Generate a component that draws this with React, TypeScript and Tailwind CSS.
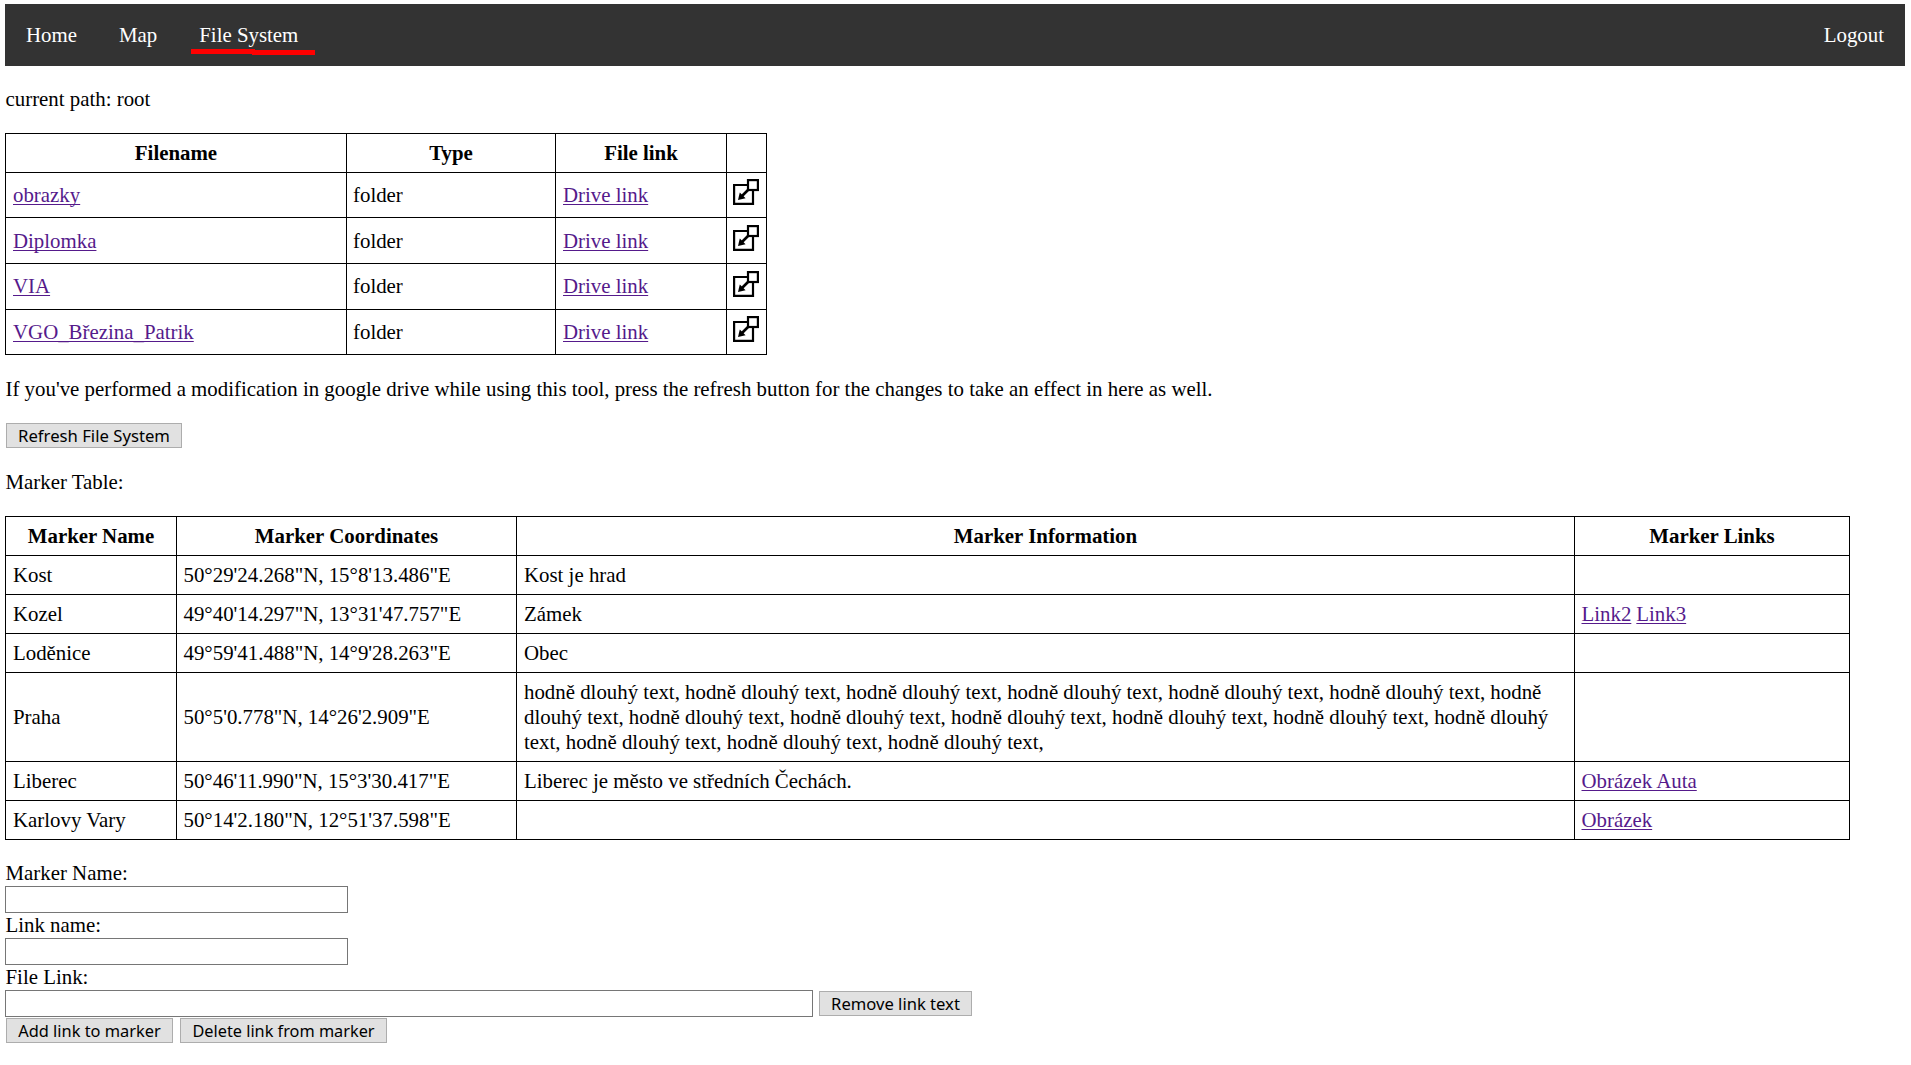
import type { ReactNode } from 'react';

const folders = [
  { name: 'obrazky', height: 'h-[45px]', pad: '', iconPad: 'pb-[6px]' },
  { name: 'Diplomka', height: 'h-[46px]', pad: 'pt-px', iconPad: 'pb-[5px]' },
  { name: 'VIA', height: 'h-[46px]', pad: '', iconPad: 'pb-[5px]' },
  { name: 'VGO_Březina_Patrik', height: 'h-[45px]', pad: '', iconPad: 'pb-[6px]' },
];

const longText = Array(16).fill('hodně dlouhý text,').join(' ');

const markers = [
  { name: 'Kost', coords: '50°29\'24.268"N, 15°8\'13.486"E', info: 'Kost je hrad', links: [] },
  { name: 'Kozel', coords: '49°40\'14.297"N, 13°31\'47.757"E', info: 'Zámek', links: ['Link2', 'Link3'] },
  { name: 'Loděnice', coords: '49°59\'41.488"N, 14°9\'28.263"E', info: 'Obec', links: [] },
  { name: 'Praha', coords: '50°5\'0.778"N, 14°26\'2.909"E', info: longText, links: [] },
  { name: 'Liberec', coords: '50°46\'11.990"N, 15°3\'30.417"E', info: 'Liberec je město ve středních Čechách.', links: ['Obrázek Auta'] },
  { name: 'Karlovy Vary', coords: '50°14\'2.180"N, 12°51\'37.598"E', info: '', links: ['Obrázek'] },
];

const cell = 'border-r border-b border-black px-[7px]';
const tightCell = 'border-r border-b border-black pl-[6.5px] pr-[7px]';

function Link({ children }: { children: ReactNode }) {
  return (
    <a href="#" className="text-[#551a8b] underline decoration-1 underline-offset-2 [text-decoration-skip-ink:none]">
      {children}
    </a>
  );
}

function Button({ children, size }: { children: ReactNode; size: string }) {
  return (
    <button
      className={`flex h-[25px] items-center justify-center whitespace-nowrap border border-[#adadad] bg-[#e1e1e1] font-['Noto_Sans',sans-serif] leading-[22px] ${size}`}
    >
      {children}
    </button>
  );
}

function OpenIcon() {
  return (
    <svg width="26" height="26" viewBox="0 0 26 26" fill="none" stroke="#000" strokeWidth="2.2" className="block">
      <path d="M14 6H1.1v18.9H20V12" />
      <rect x="15" y="1.1" width="9.9" height="9.9" />
      <path d="M15 11L8.5 17.5" strokeWidth="2.6" />
      <path d="M5 21l1.8-7.6 5.8 5.8z" fill="#000" stroke="none" />
    </svg>
  );
}

export default function App() {
  return (
    <div className="h-[1065px] bg-white pl-[5px] pr-[6px] pt-1 font-['Liberation_Serif',serif] text-[20.87px] leading-[25px] text-black">
      <nav className="flex h-[62px] items-center justify-between bg-[#333] px-[21px] text-white">
        <div className="flex gap-[42px]">
          <a href="#">Home</a>
          <a href="#">Map</a>
          <a href="#" className="relative">
            File System
            <span className="absolute -left-2 top-[26.5px] h-[5px] w-16 bg-[#f00]" />
            <span className="absolute left-[53px] top-[27.5px] h-[5px] w-[63px] bg-[#f00]" />
          </a>
        </div>
        <a href="#">Logout</a>
      </nav>

      <p className="mt-[21px] h-[46px] pl-[0.5px]">current path: root</p>

      <table className="w-[762px] table-fixed border-separate border-spacing-0 border-l border-t border-black">
        <colgroup>
          <col className="w-[341px]" />
          <col className="w-[209px]" />
          <col className="w-[171px]" />
          <col className="w-[40px]" />
        </colgroup>
        <thead>
          <tr className="h-[39px]">
            <th className={cell}>Filename</th>
            <th className={cell}>Type</th>
            <th className={cell}>File link</th>
            <th className={cell} />
          </tr>
        </thead>
        <tbody>
          {folders.map((f) => (
            <tr key={f.name} className={f.height}>
              <td className={`${cell} ${f.pad}`}><Link>{f.name}</Link></td>
              <td className={`border-r border-b border-black px-[6px] ${f.pad}`}>folder</td>
              <td className={`${cell} ${f.pad}`}><Link>Drive link</Link></td>
              <td className={`border-r border-b border-black pl-[6px] ${f.iconPad}`}><OpenIcon /></td>
            </tr>
          ))}
        </tbody>
      </table>

      <p className="mt-[22px] pl-[0.5px]">
        If you've performed a modification in google drive while using this tool, press the refresh button for the changes to take an effect in here as well.
      </p>
      <div className="ml-px mt-[21px]">
        <Button size="w-[176px] text-[16.7px]">Refresh File System</Button>
      </div>
      <p className="mt-[22px] h-[46px] pl-[0.5px]">Marker Table:</p>

      <table className="w-[1845px] table-fixed border-separate border-spacing-0 border-l border-t border-black">
        <colgroup>
          <col className="w-[171px]" />
          <col className="w-[340px]" />
          <col className="w-[1058px]" />
          <col className="w-[275px]" />
        </colgroup>
        <thead>
          <tr className="h-[39px]">
            <th className={cell}>Marker Name</th>
            <th className={cell}>Marker Coordinates</th>
            <th className={cell}>Marker Information</th>
            <th className={cell}>Marker Links</th>
          </tr>
        </thead>
        <tbody>
          {markers.map((m) => (
            <tr key={m.name} className={m.name === 'Praha' ? 'h-[89px]' : 'h-[39px]'}>
              <td className={cell}>{m.name}</td>
              <td className={tightCell}>{m.coords}</td>
              <td className={cell}>{m.info}</td>
              <td className={tightCell}>
                <div className="flex gap-[5px]">
                  {m.links.map((l) => <Link key={l}>{l}</Link>)}
                </div>
              </td>
            </tr>
          ))}
        </tbody>
      </table>

      <form className="mt-[21px]">
        <label className="block h-[25px] pl-[0.5px]">Marker Name:</label>
        <input className="block h-[27px] w-[343px] border border-[#767676] bg-white" />
        <label className="block h-[25px] pl-[0.5px]">Link name:</label>
        <input className="block h-[27px] w-[343px] border border-[#767676] bg-white" />
        <label className="block h-[25px] pl-[0.5px]">File Link:</label>
        <div className="flex items-center gap-[6px]">
          <input className="block h-[27px] w-[808px] border border-[#767676] bg-white" />
          <Button size="w-[153px] text-[16.6px]">Remove link text</Button>
        </div>
        <div className="ml-px mt-px flex gap-[7px]">
          <Button size="w-[167px] text-[16.4px]">Add link to marker</Button>
          <Button size="w-[207px] text-[16.3px]">Delete link from marker</Button>
        </div>
      </form>
    </div>
  );
}
